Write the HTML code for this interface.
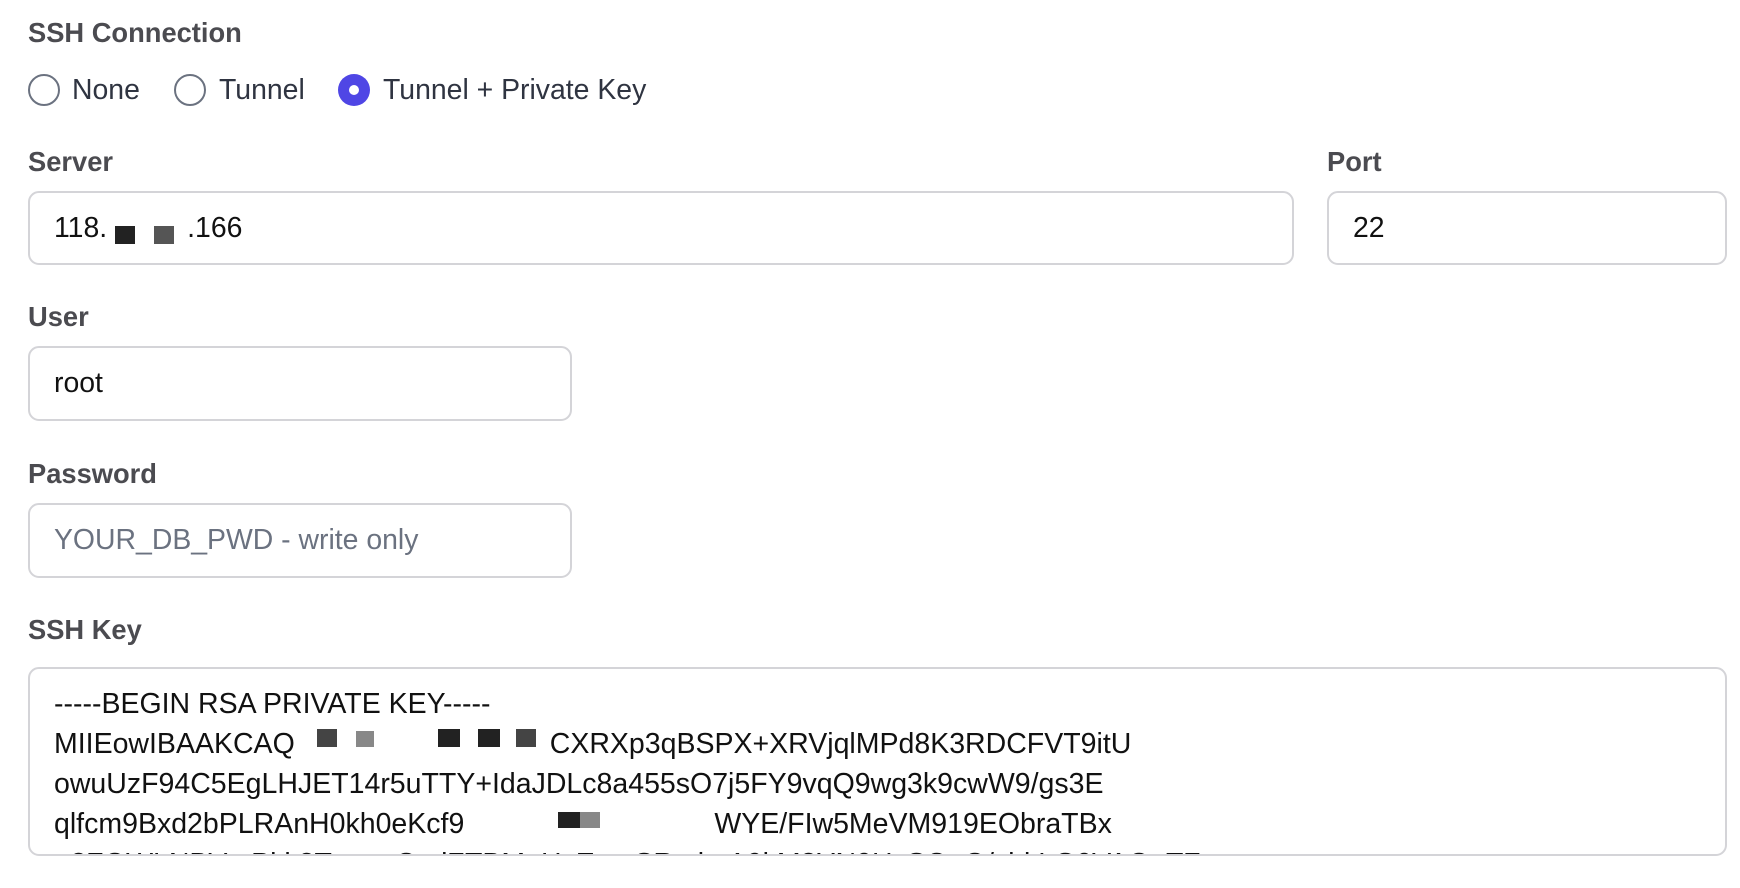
<!DOCTYPE html>
<html><head><meta charset="utf-8"><style>
*{box-sizing:border-box;margin:0;padding:0}
body{width:1740px;height:888px;background:#fff;font-family:"Liberation Sans",sans-serif;position:relative;overflow:hidden}
.lbl{position:absolute;left:28px;font-size:27.3px;font-weight:bold;color:#4b4b50;line-height:30px}
.inp{position:absolute;border:2px solid #d4d4d8;border-radius:11px;background:#fff;font-size:28.4px;color:#111;padding-left:24px;display:flex;align-items:center}
.radio{position:absolute;top:74px;width:32px;height:32px;border-radius:50%;border:2px solid #6b7280}
.rt{position:absolute;top:74px;font-size:28.4px;color:#2f3441;line-height:32px}
.blk{position:absolute;background:#222}
.ta{position:absolute;left:28px;top:667px;width:1699px;height:189px;border:2px solid #d4d4d8;border-radius:11px;overflow:hidden}
.ta div{position:absolute;left:24px;font-size:28.5px;color:#111;line-height:40px;white-space:nowrap}
</style></head><body>
<div class="lbl" style="top:18px">SSH Connection</div>
<div class="radio" style="left:28px"></div><div class="rt" style="left:72px">None</div>
<div class="radio" style="left:174px"></div><div class="rt" style="left:219px">Tunnel</div>
<div class="radio" style="left:338px;border:none;background:#4f46e5"><div style="position:absolute;left:11px;top:11px;width:10px;height:10px;border-radius:50%;background:#fff"></div></div>
<div class="rt" style="left:383px">Tunnel + Private Key</div>

<div class="lbl" style="top:147px">Server</div>
<div class="lbl" style="top:147px;left:1327px">Port</div>
<div class="inp" style="left:28px;top:191px;width:1266px;height:74px">118.<span style="display:inline-block;width:80px"></span>.166</div>
<div class="blk" style="left:115px;top:226px;width:20px;height:18px"></div>
<div class="blk" style="left:154px;top:226px;width:20px;height:18px;background:#555"></div>
<div class="inp" style="left:1327px;top:191px;width:400px;height:74px">22</div>

<div class="lbl" style="top:302px">User</div>
<div class="inp" style="left:28px;top:346px;width:544px;height:75px">root</div>

<div class="lbl" style="top:459px">Password</div>
<div class="inp" style="left:28px;top:503px;width:544px;height:75px;color:#6b7280">YOUR_DB_PWD - write only</div>

<div class="lbl" style="top:615px">SSH Key</div>
<div class="ta">
<div style="top:15px">-----BEGIN RSA PRIVATE KEY-----</div>
<div style="top:55px">MIIEowIBAAKCAQ<span style="display:inline-block;width:255px"></span>CXRXp3qBSPX+XRVjqlMPd8K3RDCFVT9itU</div>
<div style="top:95px">owuUzF94C5EgLHJET14r5uTTY+IdaJDLc8a455sO7j5FY9vqQ9wg3k9cwW9/gs3E</div>
<div style="top:135px">qlfcm9Bxd2bPLRAnH0kh0eKcf9<span style="display:inline-block;width:250px"></span>WYE/FIw5MeVM919EObraTBx</div>
<div style="top:175px">+3ZQWLNBVsrPkk2TmmeQsdZTBMuHsEmaSRcdmA9kM8YN0HzSQqQ/zhkLG0VAQuTZ</div>
<span class="blk" style="left:287px;top:60px;width:20px;height:18px;background:#444"></span>
<span class="blk" style="left:326px;top:62px;width:18px;height:16px;background:#888"></span>
<span class="blk" style="left:408px;top:60px;width:22px;height:18px"></span>
<span class="blk" style="left:448px;top:60px;width:22px;height:18px"></span>
<span class="blk" style="left:486px;top:60px;width:20px;height:18px;background:#444"></span>
<span class="blk" style="left:528px;top:143px;width:22px;height:16px"></span>
<span class="blk" style="left:550px;top:143px;width:20px;height:16px;background:#888"></span>
</div>
</body></html>
